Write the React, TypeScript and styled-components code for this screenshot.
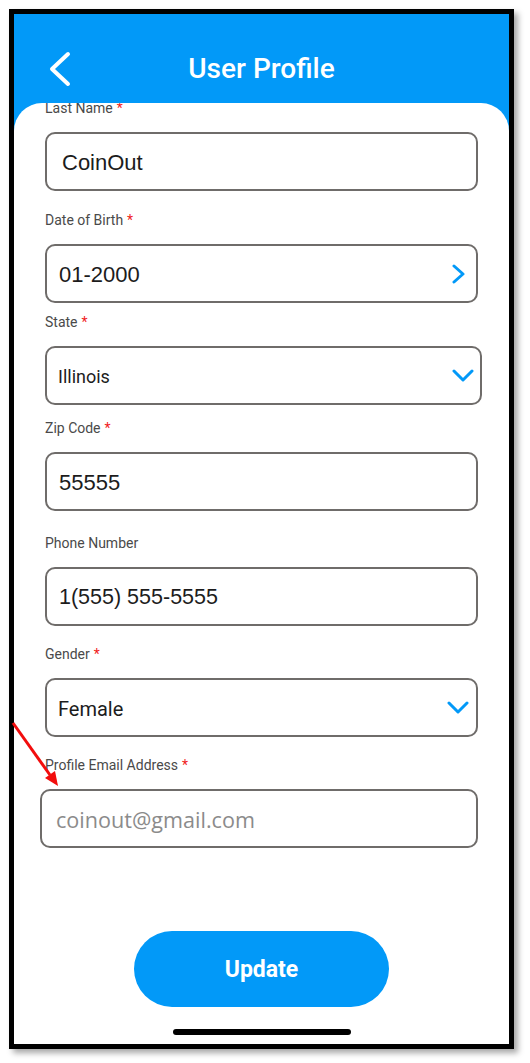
import { FC, ReactElement } from 'react';
import styled, { createGlobalStyle } from 'styled-components';

const BLUE = '#0299f8';

const GlobalStyle = createGlobalStyle`
  body {
    margin: 0;
    background: #fff;
    font-family: Roboto, 'Liberation Sans', sans-serif;
  }
`;

const Page = styled.div`
  position: relative;
  width: 530px;
  height: 1063px;
  padding: 9px 0 0 9px;
  box-sizing: border-box;
`;

const Frame = styled.div`
  width: 505px;
  height: 1040px;
  box-sizing: border-box;
  border: 5px solid #000;
  background: ${BLUE};
  box-shadow: 4px 4px 6px rgba(0, 0, 0, 0.35);
  display: flex;
  flex-direction: column;
  overflow: hidden;
`;

const Header = styled.header`
  height: 89px;
  flex-shrink: 0;
  box-sizing: border-box;
  padding: 20px 34px 0;
  display: grid;
  grid-template-columns: 1fr auto 1fr;
  align-items: center;
`;

const BackButton = styled.button`
  justify-self: start;
  background: none;
  border: none;
  padding: 0;
  display: flex;
  cursor: pointer;
`;

const Title = styled.h1`
  margin: 0;
  color: #fff;
  font-family: Roboto, sans-serif;
  font-weight: 500;
  font-size: 28px;
  line-height: 34px;
`;

const Card = styled.main`
  flex: 1;
  background: #fff;
  border-radius: 28px 28px 0 0;
  overflow: hidden;
  display: flex;
  flex-direction: column;
`;

// the form is scrolled a little, so the first label slips under the header
const Form = styled.div`
  padding: 0 26px 0 31px;
  margin-top: -3px;
  display: flex;
  flex-direction: column;
`;

const Field = styled.div<{ $gap: number }>`
  margin-top: ${(p) => p.$gap}px;
  display: flex;
  flex-direction: column;
`;

const Label = styled.label`
  font-family: Roboto, sans-serif;
  font-size: 14px;
  line-height: 16px;
  color: #4a4a4a;
  margin-bottom: 16px;
`;

const Required = styled.span`
  color: #f01c1c;
  margin-left: 4px;
`;

const Box = styled.div<{ $w: number; $dx: number; $pl: number; $pr: number }>`
  width: ${(p) => p.$w}px;
  margin-left: ${(p) => p.$dx}px;
  height: 59px;
  box-sizing: border-box;
  border: 2px solid #6f6c6a;
  border-radius: 10px;
  display: flex;
  align-items: center;
  justify-content: space-between;
  padding: 0 ${(p) => p.$pr}px 0 ${(p) => p.$pl}px;
`;

type Kind = 'text' | 'select' | 'placeholder';

const Value = styled.span<{ $kind: Kind; $size: number }>`
  font-size: ${(p) => p.$size}px;
  font-family: ${(p) =>
    p.$kind === 'text'
      ? "'Liberation Sans', Arial, sans-serif"
      : p.$kind === 'placeholder'
        ? "'Open Sans', sans-serif"
        : 'Roboto, sans-serif'};
  color: ${(p) => (p.$kind === 'placeholder' ? '#8b8b8b' : '#1c1c1c')};
  padding-top: 2px;
`;

const Footer = styled.div`
  margin-top: auto;
  padding-bottom: 9px;
  display: flex;
  flex-direction: column;
  align-items: center;
`;

const UpdateButton = styled.button`
  width: 255px;
  height: 76px;
  border: none;
  border-radius: 38px;
  background: ${BLUE};
  color: #fff;
  font-family: Roboto, sans-serif;
  font-weight: 700;
  font-size: 23px;
  cursor: pointer;
`;

const HomeBar = styled.div`
  margin-top: 22px;
  width: 178px;
  height: 6px;
  border-radius: 3px;
  background: #000;
`;

const Annotation = styled.svg`
  position: absolute;
  left: 0;
  top: 0;
  pointer-events: none;
`;

const ChevronRight = () => (
  <svg width="14" height="20" viewBox="0 0 14 20">
    <polyline points="2,2 11,10 2,18" fill="none" stroke={BLUE} strokeWidth="3" strokeLinecap="round" strokeLinejoin="round" />
  </svg>
);

const ChevronDown = () => (
  <svg width="22" height="13" viewBox="0 0 22 13">
    <polyline points="2,2 11,11 20,2" fill="none" stroke={BLUE} strokeWidth="3" strokeLinecap="round" strokeLinejoin="round" />
  </svg>
);

interface FieldDef {
  label: string;
  required: boolean;
  value: string;
  kind: Kind;
  size: number;
  gap: number;
  icon?: 'right' | 'down';
  w?: number;
  dx?: number;
  pl?: number;
  pr?: number;
}

const fields: FieldDef[] = [
  { label: 'Last Name', required: true, value: 'CoinOut', kind: 'text', size: 22, gap: 0, pl: 15 },
  { label: 'Date of Birth', required: true, value: '01-2000', kind: 'text', size: 22, gap: 21, icon: 'right', pr: 10 },
  { label: 'State', required: true, value: 'Illinois', kind: 'select', size: 18, gap: 11, icon: 'down', w: 437, pl: 11, pr: 6 },
  { label: 'Zip Code', required: true, value: '55555', kind: 'text', size: 22, gap: 15 },
  { label: 'Phone Number', required: false, value: '1(555) 555-5555', kind: 'text', size: 21.5, gap: 24 },
  { label: 'Gender', required: true, value: 'Female', kind: 'select', size: 20, gap: 20, icon: 'down', pl: 11, pr: 7 },
  { label: 'Profile Email Address', required: true, value: 'coinout@gmail.com', kind: 'placeholder', size: 21.6, gap: 20, w: 438, dx: -5, pl: 14 },
];

const App: FC = (): ReactElement => {
  return (
    <Page>
      <GlobalStyle />
      <Frame>
        <Header>
          <BackButton aria-label="Back">
            <svg width="24" height="36" viewBox="0 0 24 36">
              <polyline points="20,3 4,18 20,33" fill="none" stroke="#fff" strokeWidth="4" strokeLinecap="round" strokeLinejoin="round" />
            </svg>
          </BackButton>
          <Title>User Profile</Title>
          <span />
        </Header>
        <Card>
          <Form>
            {fields.map((f) => (
              <Field key={f.label} $gap={f.gap}>
                <Label>
                  {f.label}
                  {f.required && <Required>*</Required>}
                </Label>
                <Box $w={f.w ?? 433} $dx={f.dx ?? 0} $pl={f.pl ?? 12} $pr={f.pr ?? 12}>
                  <Value $kind={f.kind} $size={f.size}>
                    {f.value}
                  </Value>
                  {f.icon === 'right' && <ChevronRight />}
                  {f.icon === 'down' && <ChevronDown />}
                </Box>
              </Field>
            ))}
          </Form>
          <Footer>
            <UpdateButton>Update</UpdateButton>
            <HomeBar />
          </Footer>
        </Card>
      </Frame>
      <Annotation width="530" height="1063" viewBox="0 0 530 1063">
        <line x1="13" y1="723" x2="50" y2="775" stroke="#f20d0d" strokeWidth="3" />
        <polygon points="58,786 55,771 45,778" fill="#f20d0d" />
      </Annotation>
    </Page>
  );
};

export default App;
